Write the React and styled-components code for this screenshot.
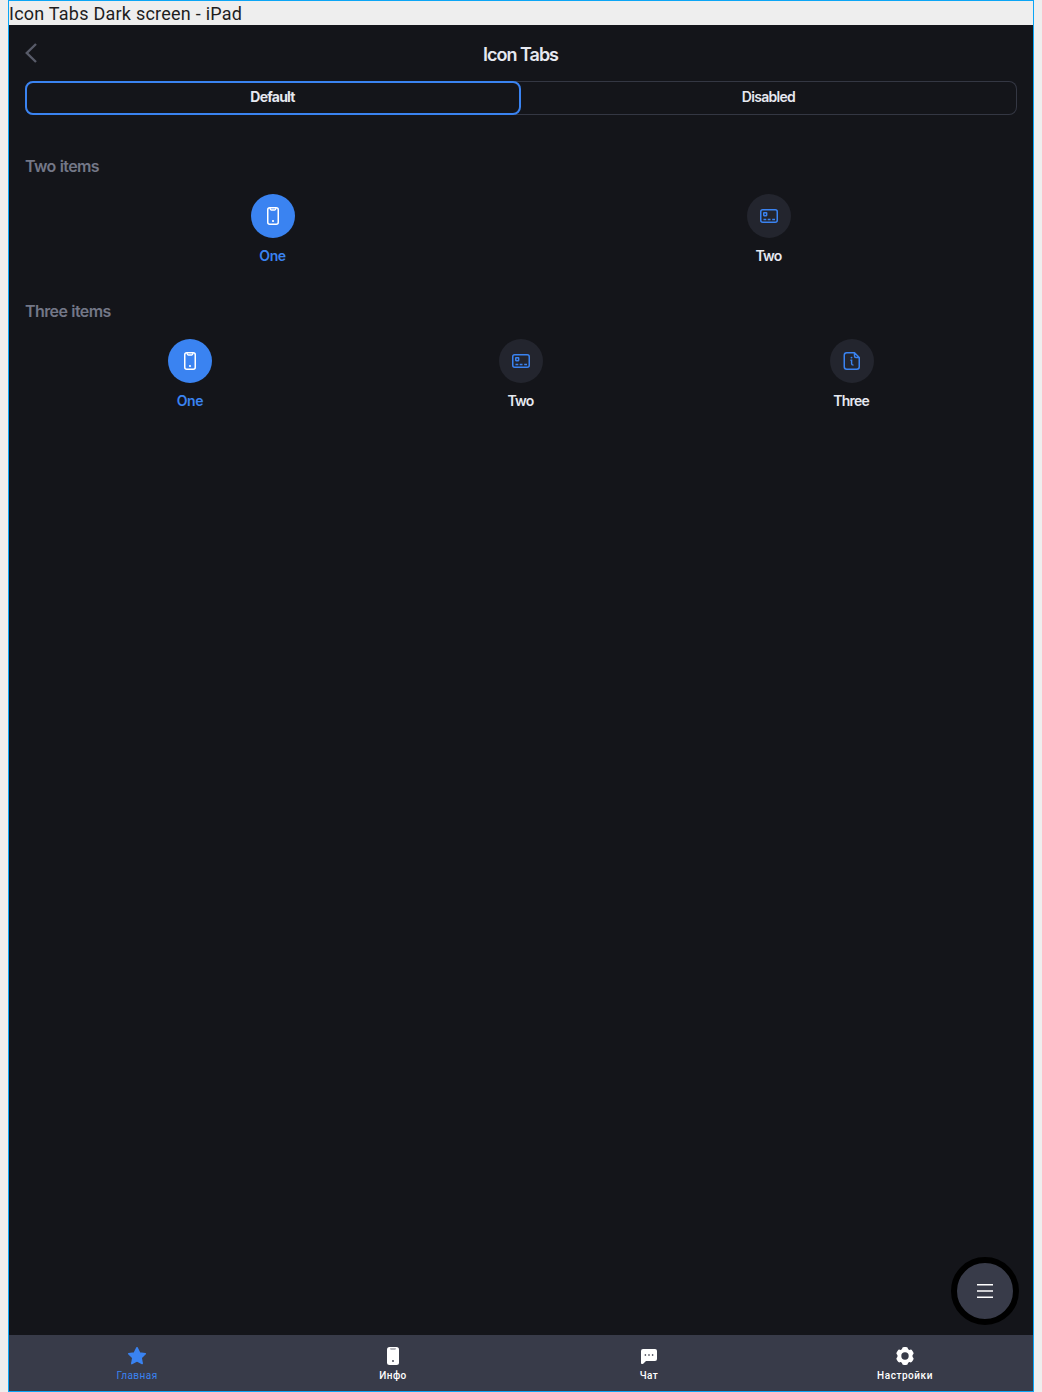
import React from "react";
import styled, { createGlobalStyle } from "styled-components";

const Global = createGlobalStyle`
  * { box-sizing: border-box; }
  body { margin: 0; background: #eeeeee; }
`;

const Frame = styled.div`
  width: 1026px;
  height: 1392px;
  margin: 0 8px;
  border: 1px solid #0ba5f5;
  background: #14151a;
  display: flex;
  flex-direction: column;
  position: relative;
  font-family: Inter, "Liberation Sans", sans-serif;
  overflow: hidden;
`;
const Caption = styled.div`
  height: 24px;
  flex: none;
  background: #eeeeee;
  color: #1e1e1e;
  font: 400 18px/25px Roboto, sans-serif;
  letter-spacing: 0.24px;
  white-space: nowrap;
`;
const Header = styled.header`
  height: 56px;
  flex: none;
  padding: 0 16px;
  display: grid;
  grid-template-columns: 24px 1fr 24px;
  align-items: center;
`;
const Title = styled.h1`
  margin: 0;
  text-align: center;
  color: #e6e8f0;
  font-size: 18px;
  line-height: 24px;
  font-weight: 600;
  letter-spacing: -1px;
  padding: 3px 1px 0 0;
`;
const Segments = styled.div`
  height: 34px;
  flex: none;
  margin: 0 16px;
  border-radius: 8px;
  box-shadow: inset 0 0 0 1px #343743;
  display: grid;
  grid-template-columns: 1fr 1fr;
`;
const Segment = styled.div`
  border: 2px solid ${(p) => (p.$active ? "#3a83f1" : "transparent")};
  border-radius: 8px;
  padding-right: 1px;
  text-align: center;
  color: #e6e8f0;
  font-size: 14px;
  line-height: 28px;
  font-weight: ${(p) => (p.$active ? 700 : 600)};
  letter-spacing: ${(p) => (p.$active ? "-0.75px" : "-0.7px")};
`;
const Section = styled.section`
  height: 145px;
  flex: none;
  padding: 0 16px;
`;
const Sections = styled.main`
  flex: 1;
  padding-top: 41px;
`;
const SectionTitle = styled.h2`
  margin: 0;
  height: 38px;
  color: #737787;
  font-size: 16px;
  line-height: 21px;
  font-weight: 600;
  letter-spacing: -0.6px;
  word-spacing: 0.6px;
`;
const Tabs = styled.div`
  display: flex;
`;
const Tab = styled.div`
  flex: 1;
  display: flex;
  flex-direction: column;
  align-items: center;
  gap: 8px;
  color: ${(p) => (p.$active ? "#3a83f1" : "#e6e8f0")};
  font-size: 14px;
  line-height: 20px;
  font-weight: 600;
  letter-spacing: ${(p) => p.$spacing || "-0.4px"};
`;
const TabLabel = styled.span`
  padding-right: 1px;
`;
const Circle = styled.div`
  width: 44px;
  height: 44px;
  border-radius: 50%;
  display: grid;
  place-items: center;
  background: ${(p) => (p.$active ? "#3a83f1" : "#23252e")};
  color: ${(p) => (p.$active ? "#ffffff" : "#3a83f1")};
`;
const BottomBar = styled.nav`
  height: 56px;
  flex: none;
  background: #383b49;
  display: grid;
  grid-template-columns: repeat(4, 1fr);
`;
const NavItem = styled.div`
  display: flex;
  flex-direction: column;
  align-items: center;
  gap: 1px;
  padding-top: 9px;
  color: ${(p) => (p.$active ? "#3a83f1" : "#ffffff")};
  font-family: Roboto, sans-serif;
  font-size: 10px;
  line-height: 14px;
  font-weight: ${(p) => (p.$active ? 400 : 500)};
  letter-spacing: ${(p) => p.$spacing};
`;
const MenuButton = styled.button`
  position: absolute;
  right: 14px;
  bottom: 66px;
  width: 68px;
  height: 68px;
  padding: 0;
  border: 6px solid #000;
  border-radius: 50%;
  background: #383b49;
  display: grid;
  place-items: center;
`;

const Svg = ({ size = 24, children, ...rest }) => (
  <svg width={size} height={size} viewBox={`0 0 ${size} ${size}`} fill="none" {...rest}>
    {children}
  </svg>
);

const BackIcon = () => (
  <Svg>
    <path d="M11 3 L1.8 12 L11 21" stroke="#585b69" strokeWidth="2.4" />
  </Svg>
);
const PhoneIcon = () => (
  <Svg stroke="currentColor" strokeWidth="1.5">
    <rect x="6.75" y="3.75" width="10.5" height="16.5" rx="2" />
    <path d="M9 4 Q9.2 6 10.3 6 H13.7 Q14.8 6 15 4" strokeWidth="1.3" />
    <circle cx="12" cy="17" r="1.1" fill="currentColor" stroke="none" />
  </Svg>
);
const CardIcon = () => (
  <Svg stroke="currentColor" strokeWidth="1.5">
    <rect x="3.75" y="5.75" width="16.5" height="12.5" rx="2" />
    <rect x="6.75" y="8.75" width="2.9" height="2.9" rx="0.3" />
    <path d="M6.5 15.5 H9.3 M10.7 15.5 H13.5 M15.2 15.5 H18" strokeWidth="1.3" />
  </Svg>
);
const InfoIcon = () => (
  <Svg stroke="currentColor" strokeWidth="1.5">
    <path d="M14.5 3.75 H6.75 Q4.25 3.75 4.25 6.25 V17.75 Q4.25 20.25 6.75 20.25 H16.75 Q19.25 20.25 19.25 17.75 V8.5 Z M14.5 3.9 V7 Q14.5 8.5 16 8.5 H19" strokeLinejoin="round" />
    <path d="M10.4 11.2 H11.6 V14.8 Q11.6 16.1 13.5 16.1" strokeWidth="1.4" />
    <circle cx="11.5" cy="8.6" r="0.95" fill="currentColor" stroke="none" />
  </Svg>
);
const StarIcon = () => (
  <Svg>
    <path d="M12 3.7 L14.6 8.9 L20.3 9.7 L16.2 13.8 L17.2 19.6 L12 16.9 L6.8 19.6 L7.8 13.8 L3.7 9.7 L9.4 8.9 Z" fill="currentColor" stroke="currentColor" strokeWidth="1.5" strokeLinejoin="round" />
  </Svg>
);
const SolidPhoneIcon = () => (
  <Svg>
    <rect x="6" y="3" width="12" height="18" rx="2.5" fill="currentColor" />
    <path d="M9 4.2 H15 L14.4 5.7 H9.6 Z" fill="#9b9ca4" />
    <circle cx="12" cy="17" r="0.9" fill="#383b49" />
  </Svg>
);
const ChatIcon = () => (
  <Svg>
    <path d="M6 5 H18 Q20 5 20 7 V15 Q20 17 18 17 H9 L6.2 19.7 Q4 20.8 4 19 V7 Q4 5 6 5 Z" fill="currentColor" />
    <path d="M7.7 11 H9.1 M11.3 11 H12.7 M14.9 11 H16.3" stroke="#383b49" strokeWidth="1.4" />
  </Svg>
);
const GearIcon = () => (
  <Svg>
    <g fill="currentColor">
      <circle cx="12" cy="12" r="7.6" />
      {[0, 60, 120].map((angle) => (
        <rect key={angle} x="9" y="3" width="6" height="18" rx="2" transform={`rotate(${angle} 12 12)`} />
      ))}
    </g>
    <circle cx="12" cy="12" r="3.7" fill="#383b49" />
  </Svg>
);
const MenuIcon = () => (
  <Svg>
    <path d="M4 5.75 H20 M4 12 H20 M4 18.25 H20" stroke="#fff" strokeWidth="1.6" />
  </Svg>
);

const one = { label: "One", Icon: PhoneIcon, active: true, spacing: "-0.4px" };
const two = { label: "Two", Icon: CardIcon, spacing: "-0.8px" };
const three = { label: "Three", Icon: InfoIcon, spacing: "-0.75px" };
const groups = [
  { title: "Two items", items: [one, two] },
  { title: "Three items", items: [one, two, three] },
];
const nav = [
  { label: "Главная", Icon: StarIcon, active: true, spacing: "0.45px" },
  { label: "Инфо", Icon: SolidPhoneIcon, spacing: "0.4px" },
  { label: "Чат", Icon: ChatIcon, spacing: "0.4px" },
  { label: "Настройки", Icon: GearIcon, spacing: "0.55px" },
];

export default function App() {
  return (
    <>
      <Global />
      <Frame>
        <Caption>Icon Tabs Dark screen - iPad</Caption>
        <Header>
          <BackIcon />
          <Title>Icon Tabs</Title>
        </Header>
        <Segments>
          <Segment $active>Default</Segment>
          <Segment>Disabled</Segment>
        </Segments>
        <Sections>
          {groups.map((group) => (
            <Section key={group.title}>
              <SectionTitle>{group.title}</SectionTitle>
              <Tabs>
                {group.items.map(({ label, Icon, active, spacing }) => (
                  <Tab key={label} $active={active} $spacing={spacing}>
                    <Circle $active={active}><Icon /></Circle>
                    <TabLabel>{label}</TabLabel>
                  </Tab>
                ))}
              </Tabs>
            </Section>
          ))}
        </Sections>
        <BottomBar>
          {nav.map(({ label, Icon, active, spacing }) => (
            <NavItem key={label} $active={active} $spacing={spacing}>
              <Icon />
              {label}
            </NavItem>
          ))}
        </BottomBar>
        <MenuButton aria-label="Menu"><MenuIcon /></MenuButton>
      </Frame>
    </>
  );
}
